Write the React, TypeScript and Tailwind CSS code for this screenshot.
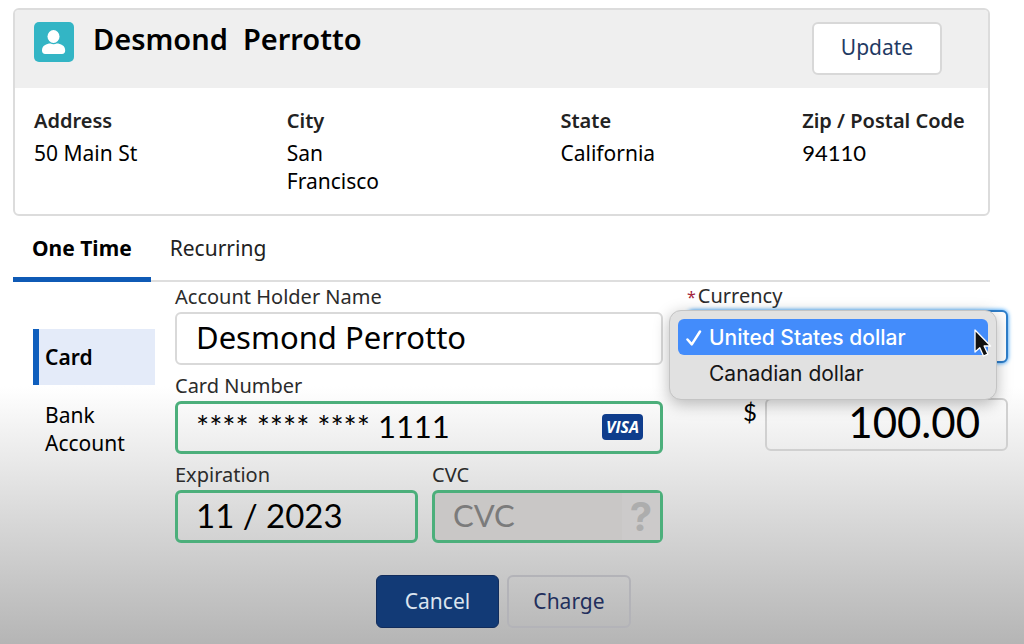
import React, { useState } from 'react'

interface AddressField {
  label: string
  value: string
  numeric?: boolean
}

const addressFields: AddressField[] = [
  { label: 'Address', value: '50 Main St' },
  { label: 'City', value: 'San Francisco' },
  { label: 'State', value: 'California' },
  { label: 'Zip / Postal Code', value: '94110', numeric: true }
]

const currencies = [
  { code: 'USD', label: 'United States dollar' },
  { code: 'CAD', label: 'Canadian dollar' }
]

const tabs = ['One Time', 'Recurring']
const methods = ['Card', 'Bank Account']

const labelClass = 'block text-xl leading-[30px] text-[#2b2b2b]'
const inputClass = 'block h-[53px] w-full rounded-md pb-1 text-black outline-none'
const validClass = 'border-[3px] border-[#4caf7b] px-[18px]'

const ContactIcon = () => (
  <svg className="h-10 w-10 shrink-0" viewBox="0 0 40 40" aria-hidden="true">
    <rect width="40" height="40" rx="5" fill="#33b5c5" />
    <ellipse cx="19.5" cy="14.500" rx="6" ry="6.500" fill="#fff" />
    <path d="M8 28.500c0-5 4.500-7 8.500-7 1.800 1.100 4.400 1.100 6.200 0 4 0 8.500 2 8.500 7 0 2.300-1.200 3.500-3.200 3.500H11.200C9.200 32 8 30.800 8 28.500z" fill="#fff" />
  </svg>
)

const Cursor = () => (
  <svg className="absolute top-[17px] right-1 h-8 w-5" viewBox="0 0 20 32" aria-hidden="true">
    <path d="M3 2v22l4.800-4.300 3.700 8.300 4.300-1.900-3.700-8.100h6.500z" fill="#111" stroke="#fff" strokeWidth="1.300" strokeLinejoin="round" />
  </svg>
)

const App: React.FC = () => {
  const [tab, setTab] = useState('One Time')
  const [method, setMethod] = useState('Card')
  const [currency, setCurrency] = useState('USD')

  return (
    <div className="min-h-screen bg-linear-to-b from-white from-60% to-[#b5b5b5] pt-2 pr-4 pl-[13px] font-['Noto_Sans',sans-serif] text-black">
      {/* Contact card */}
      <section className="mr-[18px] overflow-hidden rounded-md border-2 border-[#dcdcdc] bg-white">
        <header className="flex h-[78px] items-start bg-[#efefef] pt-3 pr-[46px] pl-[19px]">
          <ContactIcon />
          <h1 className="ml-[19px] text-[29px] leading-[34px] font-semibold whitespace-pre">Desmond  Perrotto</h1>
          <button className="ml-auto h-[53px] w-[130px] rounded-md border-2 border-[#d8d8d8] bg-white pb-[2px] text-[21px] text-[#1f3a63]">
            Update
          </button>
        </header>
        <dl className="grid grid-cols-[253fr_274fr_242fr_186fr] pt-[17px] pb-[19px] pl-[19px]">
          {addressFields.map((field) => (
            <div key={field.label}>
              <dt className="text-xl leading-8 font-semibold text-[#222]">{field.label}</dt>
              <dd className={field.numeric ? "font-['Lato',sans-serif] text-[22px] leading-8" : 'w-28 pt-[2px] text-[21px] leading-7'}>
                {field.value}
              </dd>
            </div>
          ))}
        </dl>
      </section>

      {/* Tabs */}
      <nav className="mr-[18px] flex h-[66px] border-b-2 border-[#dedede]">
        {tabs.map((name) => (
          <button
            key={name}
            onClick={() => setTab(name)}
            className={`-mb-[2px] border-b-[5px] px-[19px] pt-1 text-[21px] ${
              tab === name ? 'border-[#0f5ab5] font-bold' : 'border-transparent text-[#222]'
            }`}
          >
            {name}
          </button>
        ))}
      </nav>

      <div className="flex">
        {/* Payment method */}
        <nav className="mt-[47px] ml-5 w-[122px] shrink-0">
          {methods.map((name) => (
            <button
              key={name}
              onClick={() => setMethod(name)}
              className={`block w-full border-l-[6px] pl-[6px] text-left text-[21px] leading-7 ${
                method === name ? 'border-[#0f5fbe] bg-[#e4ebf9] py-[14px] font-semibold' : 'border-transparent py-4'
              }`}
            >
              {name}
            </button>
          ))}
        </nav>

        {/* Card details */}
        <div className="ml-5 w-0 grow-[488] space-y-[6px]">
          <div>
            <label htmlFor="holder" className={labelClass}>Account Holder Name</label>
            <input id="holder" defaultValue="Desmond Perrotto" className={`${inputClass} border-2 border-[#d9d9d9] bg-white px-[19px] text-[31px]`} />
          </div>
          <div>
            <label htmlFor="number" className={labelClass}>Card Number</label>
            <div className="relative">
              <input id="number" defaultValue="**** **** **** 1111" className={`${inputClass} ${validClass} font-['Lato',sans-serif] text-[31px]`} />
              <span className="absolute top-[13px] right-5 flex h-[26px] w-[41px] items-center justify-center rounded-sm bg-[#0f3d8c] font-['Open_Sans',sans-serif] text-base font-bold text-white italic">
                VISA
              </span>
            </div>
          </div>
          <div className="flex gap-[14px]">
            <div className="w-0 grow-[243]">
              <label htmlFor="expiration" className={labelClass}>Expiration</label>
              <input id="expiration" defaultValue="11 / 2023" className={`${inputClass} ${validClass} font-['Lato',sans-serif] text-[33px]`} />
            </div>
            <div className="w-0 grow-[231]">
              <label htmlFor="cvc" className={labelClass}>CVC</label>
              <div className="relative">
                <input id="cvc" placeholder="CVC" className={`${inputClass} ${validClass} bg-[#c9c7c6] font-['Lato',sans-serif] text-[31px] placeholder:text-[#7b7b7b]`} />
                <span className="absolute top-[3px] right-[3px] flex h-[47px] w-[38px] items-center justify-center bg-[#cccaca] font-['Inter',sans-serif] text-[40px] font-bold text-[#adadad]">
                  ?
                </span>
              </div>
            </div>
          </div>
        </div>

        {/* Currency and amount */}
        <div className="ml-6 w-0 grow-[321]">
          <label htmlFor="currency" className="block text-xl leading-7 text-[#2b2b2b]">
            <span className="mr-[2px] text-base text-[#a3243b]">*</span>
            Currency
          </label>
          <div className="relative">
            <select
              id="currency"
              value={currency}
              onChange={(e) => setCurrency(e.target.value)}
              className="block h-[53px] w-full appearance-none rounded-md border-2 border-[#2f7fcb] bg-white px-5 text-[21px] text-transparent shadow-[0_0_4px_#1b96ff]"
            >
              {currencies.map((c) => (
                <option key={c.code} value={c.code}>{c.label}</option>
              ))}
            </select>
            <div className="absolute top-0 right-[11px] -left-[18px] rounded-xl border border-[#c4c4c4] bg-[#e1e1e1] p-2 font-['Inter',sans-serif] text-[21px] shadow-[0_4px_16px_rgba(0,0,0,0.28)]">
              {currencies.map((c) => {
                const isActive = currency === c.code
                return (
                  <button
                    key={c.code}
                    onClick={() => setCurrency(c.code)}
                    className={`flex h-9 w-full items-center rounded-md pt-[2px] pl-2 ${isActive ? 'bg-[#438cfb] font-medium text-white' : 'text-[#161616]'}`}
                  >
                    <svg className="mr-[7px] h-4 w-4" viewBox="0 0 16 16" fill="none" aria-hidden="true">
                      {isActive && <path d="M1.500 9.500l4.300 4.800L14 1.500" stroke="#fff" strokeWidth="2.500" strokeLinecap="round" strokeLinejoin="round" />}
                    </svg>
                    {c.label}
                  </button>
                )
              })}
              <Cursor />
            </div>
          </div>
          <div className="mt-[35px] flex items-start justify-end gap-2">
            <label htmlFor="amount" className="font-['Lato',sans-serif] text-2xl leading-7" aria-label="Amount">$</label>
            <input id="amount" defaultValue="100.00" className={`${inputClass} max-w-[243px] border-2 border-[#d0d0d0] px-[26px] text-right font-['Lato',sans-serif] text-[42px]`} />
          </div>
        </div>
      </div>

      <footer className="mt-8 mr-[14px] flex justify-center gap-2 pb-4 text-[21px]">
        <button className="h-[53px] w-[123px] rounded-md border border-[#112c5c] bg-[#123a76] text-[#dbe4ef]">Cancel</button>
        <button className="h-[53px] w-[124px] rounded-md border-2 border-[#b3b3b8] text-[#222f5c]">Charge</button>
      </footer>
    </div>
  )
}

export default App
